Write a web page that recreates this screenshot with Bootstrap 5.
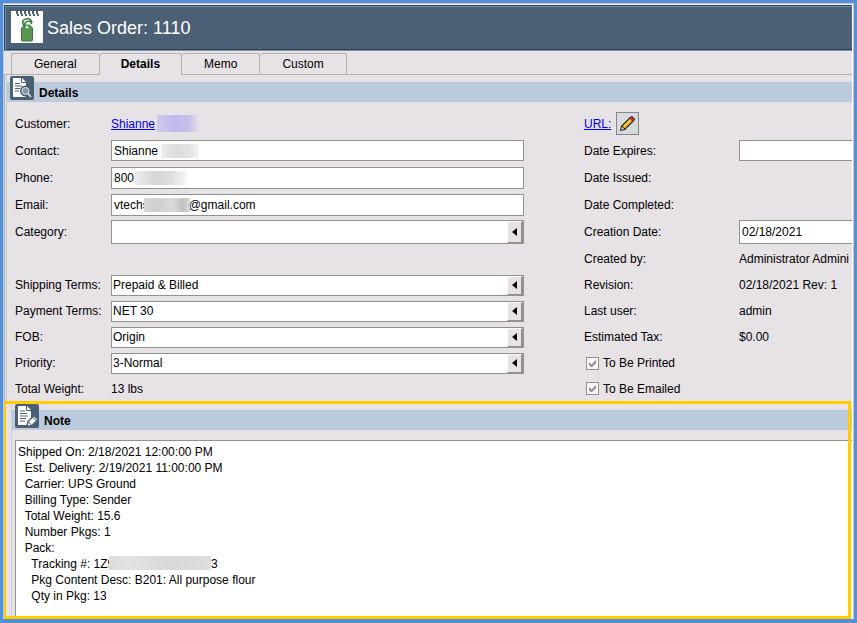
<!DOCTYPE html>
<html lang="en">
<head>
<meta charset="utf-8">
<meta name="viewport" content="width=device-width, initial-scale=1">
<title>Sales Order: 1110</title>
<link href="https://cdn.jsdelivr.net/npm/bootstrap@5.3.0/dist/css/bootstrap.min.css" rel="stylesheet">
<style>
:root { --face: #e7e2e6; --edge: #94908c; --bar: #bbcadd; --slate: #4b6075; --gold: #ffcc00; }
body { font: 12px/16px "Liberation Sans", Arial, sans-serif; color: #000; background: #558fd8; padding: 3px 3px 4px; }
.so-window { background: var(--face); border: 1px solid #c3c6d0; border-left-color: #b4cae8; border-bottom: 0; box-shadow: inset 0 1px #f4f4f8, inset -1px 0 #fff; padding: 1px 1px 0 0; }
.so-title { background: var(--slate); height: 46px; padding: 0 6px; border: 1px solid #2d3f51; border-right: 0; border-bottom-color: #6e93b5; box-shadow: inset 1px 1px #6e93b5, inset 0 -1px #2d3f51; }
.so-title svg { margin-top: -2px; }
.so-title h1 { font-size: 18px; line-height: 22px; color: #fff; }
.so-tabs { border-bottom: 1px solid #b5b1a4; padding: 2px 0 0 7px; }
.so-tabs .nav-link { font-size: 12px; line-height: 16px; color: #000; padding: 2px 22px; border: 1px solid #b5b1a4; border-radius: 3px 3px 0 0; border-bottom: 0; height: 21px; margin: 0; }
.so-tabs .nav-item + .nav-item .nav-link { border-left: 0; }
.so-tabs .nav-item:first-child .nav-link { border-right: 0; }
.so-tabs .nav-item .nav-link.active { background: var(--face); color: #000; font-weight: bold; height: 22px; margin-bottom: -1px; padding: 2px 21px 3px; border: 1px solid #b5b1a4; border-bottom: 0; }
.so-panel { border-left: 1px solid #b5b1a4; padding-left: 1px; }
.so-details { border-left: 1px solid var(--bar); margin-top: 1px; }
.so-bar { background: linear-gradient(var(--bar), var(--bar)) 0 100% / 100% 20px no-repeat; height: 26px; padding-left: 3px; gap: 5px; }
.so-bar h2 { font-size: 12px; line-height: 16px; font-weight: bold; padding-top: 9px; }
.so-form { display: grid; grid-template-columns: 96px minmax(0, 413fr) 60px 155px minmax(0, 113fr); grid-template-rows: repeat(4, 27px) 28px repeat(5, 26px) 25px; align-items: center; padding: 8px 0 0 8px; white-space: nowrap; }
.c1 { grid-column: 1; } .c2 { grid-column: 2; } .c4 { grid-column: 4; } .c5 { grid-column: 5; overflow: hidden; }
.c45 { grid-column: 4 / 6; }
.so-input { font-size: 12px; line-height: 16px; color: #000; border: 1px solid var(--edge); border-radius: 0; background: #fff; padding: 0 2px; height: 21px; min-height: 0; width: 100%; display: block; }
.so-input.mid { height: 22px; }
.so-input.tall { height: 24px; }
.so-input.cut { border-right: 0; }
select.so-input { appearance: none; padding: 0 18px 0 1px; border-right-width: 2px; }
.so-arrow { right: 1px; top: 1px; bottom: 1px; width: 16px; background: var(--face); border: 1px solid #fff; border-right: 2px solid var(--edge); border-bottom: 1px solid var(--edge); pointer-events: none; }
.so-link { color: #0000f0; text-decoration: underline; }
.so-edit { width: 23px; height: 23px; padding: 0; margin-left: 5px; border: 1px solid #888; background: #d6dcdd; }
.so-check { appearance: none; width: 13px; height: 13px; margin: 0 4px 0 2px; border: 1px solid var(--edge); background: #f8f6f8; }
.so-check:checked { background-image: url("data:image/svg+xml,%3Csvg xmlns='http://www.w3.org/2000/svg' viewBox='0 0 11 11'%3E%3Cpath d='M2 4v3l2 2h1l4-4V2L4.500 6.500z' fill='%23878c91'/%3E%3C/svg%3E"); }
.smudge { height: 14px; top: 4px; }
.sm-name { width: 41px; height: 17px; margin-left: 2px; background: linear-gradient(90deg, #cfcaea, #c0bbec 45%, #c3bee9 75%, #e1dce7); }
.sm-contact { left: 50px; width: 38px; background: linear-gradient(90deg, #eee, #dcdcdc 35%, #e0e0e0 70%, #f5f5f5); }
.sm-phone { left: 23px; width: 53px; background: linear-gradient(90deg, #eee, #d6d6d6 40%, #dedede 70%, #f7f7f7); }
.sm-email { left: 33px; width: 46px; background: linear-gradient(90deg, #d8d8d8, #cecece 25%, #dadada 60%, #c2c2c2 85%, #d8d8d8); }
.sm-track { left: 94px; top: 116px; width: 102px; height: 14px; background: linear-gradient(90deg, #dcdcdc, #e2e2e2 20%, #d9d9d9 60%, #dedede); }
.so-note { padding: 3px 0 3px 6px; margin-left: -1px; }
.so-note::after { content: ""; position: absolute; inset: 0 1px 0 -2px; border: 3px solid var(--gold); pointer-events: none; }
.so-note-in { border-left: 1px solid #c9d0e0; }
.so-memo-wrap { margin: 10px 0 0 3px; }
.so-memo { resize: none; font: inherit; color: #000; border: 1px solid var(--edge); border-right: 0; border-bottom: 0; border-radius: 0; padding: 3px 2px; background: #fff; min-height: 176px; overflow: hidden; }
</style>
<script src="https://cdn.jsdelivr.net/npm/bootstrap@5.3.0/dist/js/bootstrap.bundle.min.js"></script>
</head>
<body class="min-vh-100 d-flex flex-column">
<main class="so-window flex-grow-1 d-flex flex-column overflow-hidden">
  <header class="so-title d-flex align-items-center gap-1">
    <svg width="32" height="32" viewBox="0 0 32 32" aria-hidden="true">
      <path d="M0 0h32v32H0z" fill="#fff"/>
      <path d="M5 0h2v3h1v2H6V3H5zM9 0h2v3h1v2h-2V3H9zM13 0h2v3h1v2h-2V3h-1zM17 0h2v3h1v2h-2V3h-1zM21 0h2v3h1v2h-2V3h-1zM25 0h2v3h1v2h-2V3h-1z" fill="#4b6075"/>
      <path d="M10.500 17l3-3h5l3 3v12q0 1-1 1h-9q-1 0-1-1z" fill="#5a9352" stroke="#2f7a35"/>
      <path d="M16 16c-5-1-6-7-1-8 4-1 7 2 5 5M13 14c1-4 6-5 8-2" fill="none" stroke="#2f7a35" stroke-width="1.500"/>
      <circle cx="16" cy="16" r="1.500" fill="#d8ecd6"/>
    </svg>
    <h1 class="m-0 fw-normal">Sales Order: 1110</h1>
  </header>

  <ul class="nav nav-tabs so-tabs" role="tablist">
    <li class="nav-item"><button class="nav-link" type="button" role="tab">General</button></li>
    <li class="nav-item"><button class="nav-link active" type="button" role="tab" aria-selected="true">Details</button></li>
    <li class="nav-item"><button class="nav-link" type="button" role="tab">Memo</button></li>
    <li class="nav-item"><button class="nav-link" type="button" role="tab">Custom</button></li>
  </ul>

  <div class="so-panel flex-grow-1 d-flex flex-column">
    <section class="so-details">
      <div class="so-bar d-flex">
        <svg width="24" height="24" viewBox="0 0 24 24" aria-hidden="true">
          <rect width="24" height="24" rx="2" fill="#4b6075"/>
          <path d="M3 2h9l4 4v15H3z" fill="#fff"/>
          <path d="M11.500 2v4.500H16M5 7.500h5M5 10h7M5 12.500h5M5 15h4" stroke="#4b6075" fill="none"/>
          <circle cx="15.500" cy="15" r="4" fill="#8594a3" stroke="#4b6075" stroke-width="3"/>
          <circle cx="15.500" cy="15" r="3.500" fill="#8594a3" stroke="#e4e9ed"/>
          <path d="M18 17.500l3 3.500" stroke="#e4e9ed" stroke-width="1.500"/>
        </svg>
        <h2 class="m-0">Details</h2>
      </div>
      <form class="so-form">
        <span class="c1">Customer:</span>
        <span class="c2 d-flex align-items-center"><a class="so-link" href="#">Shianne</a><span class="sm-name"></span></span>
        <span class="c45 d-flex align-items-center"><a class="so-link" href="#">URL:</a>
          <button class="so-edit d-flex align-items-center justify-content-center" type="button" aria-label="Edit URL">
            <svg width="17" height="17" viewBox="0 0 17 17"><path d="M1 16l1-5L11 2l2-1 3 3-1 2-9 9z" fill="#111"/><path d="M3.500 11L11 3.500 13.500 6 6 13.500z" fill="#f2b51d"/><path d="M4.500 12L12 4.500" stroke="#ffe060"/><path d="M10.500 3.500l2-2L15.500 4.500l-2 2z" fill="#e3222b"/><path d="M2 14.500l1-3 2.500 2.500-3 1z" fill="#c5c5c0"/></svg>
          </button></span>

        <label class="c1" for="contact">Contact:</label>
        <div class="c2 position-relative"><input class="so-input" id="contact" value="Shianne"><span class="smudge sm-contact position-absolute"></span></div>
        <label class="c4" for="expires">Date Expires:</label>
        <div class="c5"><input class="so-input cut" id="expires"></div>

        <label class="c1" for="phone">Phone:</label>
        <div class="c2 position-relative"><input class="so-input mid" id="phone" value="800"><span class="smudge sm-phone position-absolute"></span></div>
        <span class="c45">Date Issued:</span>

        <label class="c1" for="email">Email:</label>
        <div class="c2 position-relative"><input class="so-input mid" id="email" value="vtechs&nbsp;&nbsp;&nbsp;&nbsp;&nbsp;&nbsp;&nbsp;&nbsp;&nbsp;&nbsp;&nbsp;&nbsp;@gmail.com"><span class="smudge sm-email position-absolute"></span></div>
        <span class="c45">Date Completed:</span>

        <label class="c1" for="category">Category:</label>
        <div class="c2 position-relative"><select class="so-input tall" id="category"><option></option></select><span class="so-arrow position-absolute d-flex align-items-center justify-content-center"><svg width="5" height="8"><path d="M5 0v8L0 4z"/></svg></span></div>
        <label class="c4" for="created">Creation Date:</label>
        <div class="c5"><input class="so-input tall cut" id="created" value="02/18/2021"></div>

        <span class="c4">Created by:</span><span class="c5">Administrator Admini</span>

        <label class="c1" for="ship">Shipping Terms:</label>
        <div class="c2 position-relative"><select class="so-input" id="ship"><option>Prepaid &amp; Billed</option></select><span class="so-arrow position-absolute d-flex align-items-center justify-content-center"><svg width="5" height="8"><path d="M5 0v8L0 4z"/></svg></span></div>
        <span class="c4">Revision:</span><span class="c5">02/18/2021 Rev: 1</span>

        <label class="c1" for="pay">Payment Terms:</label>
        <div class="c2 position-relative"><select class="so-input" id="pay"><option>NET 30</option></select><span class="so-arrow position-absolute d-flex align-items-center justify-content-center"><svg width="5" height="8"><path d="M5 0v8L0 4z"/></svg></span></div>
        <span class="c4">Last user:</span><span class="c5">admin</span>

        <label class="c1" for="fob">FOB:</label>
        <div class="c2 position-relative"><select class="so-input" id="fob"><option>Origin</option></select><span class="so-arrow position-absolute d-flex align-items-center justify-content-center"><svg width="5" height="8"><path d="M5 0v8L0 4z"/></svg></span></div>
        <span class="c4">Estimated Tax:</span><span class="c5">$0.00</span>

        <label class="c1" for="prio">Priority:</label>
        <div class="c2 position-relative"><select class="so-input" id="prio"><option>3-Normal</option></select><span class="so-arrow position-absolute d-flex align-items-center justify-content-center"><svg width="5" height="8"><path d="M5 0v8L0 4z"/></svg></span></div>
        <span class="c45 d-flex align-items-center"><input class="so-check" type="checkbox" id="printed" checked><label for="printed">To Be Printed</label></span>

        <span class="c1">Total Weight:</span><span class="c2">13 lbs</span>
        <span class="c45 d-flex align-items-center"><input class="so-check" type="checkbox" id="emailed" checked><label for="emailed">To Be Emailed</label></span>
      </form>
    </section>

    <section class="so-note position-relative flex-grow-1 d-flex flex-column">
      <div class="so-note-in flex-grow-1 d-flex flex-column">
        <div class="so-bar d-flex">
          <svg width="24" height="24" viewBox="0 0 24 24" aria-hidden="true">
            <rect width="24" height="24" rx="2" fill="#4b6075"/>
            <path d="M3 2h9l4 4v15H3z" fill="#fff"/>
            <path d="M11.500 2v4.500H16M5 7h5M5 9.500h7M5 12h8M5 14.500h6M5 17h5" stroke="#4b6075" fill="none"/>
            <path d="M12 22.500l1-5 6-6 4 4-6 6z" fill="#fff" stroke="#4b6075" stroke-width="1.500"/>
            <path d="M17.500 13l4 4M13.500 18l3 3" stroke="#4b6075"/>
          </svg>
          <h2 class="m-0"><label for="memo">Note</label></h2>
        </div>
        <div class="so-memo-wrap position-relative flex-grow-1 d-flex">
<textarea class="so-memo w-100" id="memo" spellcheck="false">Shipped On: 2/18/2021 12:00:00 PM
  Est. Delivery: 2/19/2021 11:00:00 PM
  Carrier: UPS Ground
  Billing Type: Sender
  Total Weight: 15.6
  Number Pkgs: 1
  Pack:
    Tracking #: 1Z9                             3
    Pkg Content Desc: B201: All purpose flour
    Qty in Pkg: 13</textarea>
          <span class="sm-track position-absolute"></span>
        </div>
      </div>
    </section>
  </div>
</main>
</body>
</html>
